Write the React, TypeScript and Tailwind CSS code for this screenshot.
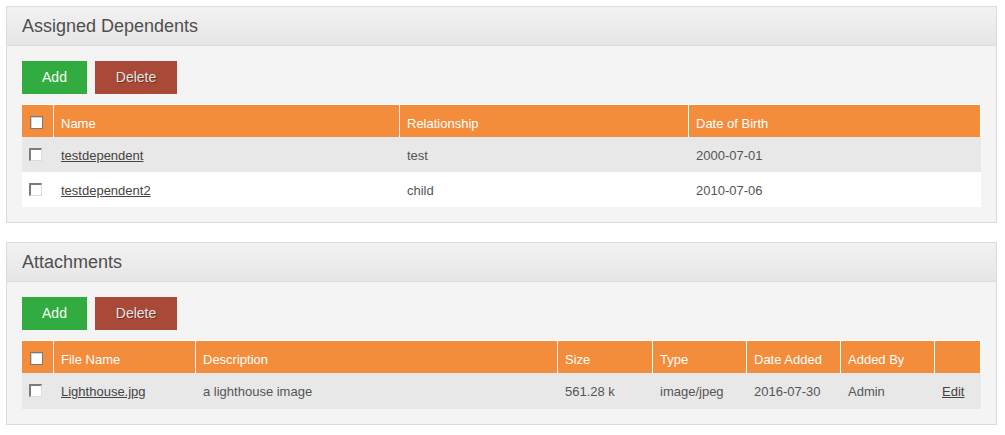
const dependents = [
  { name: 'testdependent', relationship: 'test', dob: '2000-07-01' },
  { name: 'testdependent2', relationship: 'child', dob: '2010-07-06' },
];

const attachments = [
  {
    file: 'Lighthouse.jpg',
    description: 'a lighthouse image',
    size: '561.28 k',
    type: 'image/jpeg',
    added: '2016-07-30',
    by: 'Admin',
  },
];

const HeadCheck = () => (
  <span className="block w-[13px] h-[13px] border border-[#7a7a7a] bg-white shadow-[inset_1px_1px_0_#d4d4d4]" />
);

const RowCheck = () => (
  <span className="block w-[13px] h-[13px] border-t-2 border-l-2 border-r border-b border-t-[#7c7c7c] border-l-[#7c7c7c] border-r-[#dcdcdc] border-b-[#dcdcdc] bg-white" />
);

const Panel = ({ title, children }: { title: string; children: React.ReactNode }) => (
  <section className="mx-[6px] w-[991px] border border-[#dcdcdc] bg-[#f4f4f4]">
    <div className="h-[39px] flex items-center px-[15px] border-b border-[#dcdcdc] bg-gradient-to-b from-[#f2f2f2] to-[#e6e6e6]">
      <h2 className="text-[18px] leading-[20px] text-[#4f4f4f]">{title}</h2>
    </div>
    <div className="px-[15px] pt-[15px] pb-[15px]">
      <div className="flex gap-[8px]">
        <button className="w-[65px] h-[33px] flex items-center justify-center bg-[#32ab41] text-[#f6fff6] text-[14px]">
          Add
        </button>
        <button className="w-[82px] h-[33px] flex items-center justify-center bg-[#a84a37] text-[#e2e2e2] text-[14px] [text-shadow:1px_1px_0_rgba(60,20,10,0.45)]">
          Delete
        </button>
      </div>
      <div className="mt-[10px]">{children}</div>
    </div>
  </section>
);

const th = 'border-t border-r border-white bg-[#f38c3b] text-white font-normal text-left px-[7px] pt-[11px] pb-[6px] leading-[15px] align-top';
const td = 'px-[7px] pt-[11px] leading-[15px] text-[#555] align-top';

export default function App() {
  return (
    <div className="bg-white w-[1005px] h-[435px] pt-[6px] font-['Liberation_Sans',Arial,sans-serif] text-[13px]">
      <Panel title="Assigned Dependents">
        <table className="w-[959px] table-fixed border-separate border-spacing-0">
          <colgroup>
            <col className="w-[32px]" />
            <col className="w-[346px]" />
            <col className="w-[289px]" />
            <col className="w-[292px]" />
          </colgroup>
          <thead>
            <tr>
              <th className={th + ' pl-[8px] pt-[10px]'}>
                <HeadCheck />
              </th>
              <th className={th}>Name</th>
              <th className={th}>Relationship</th>
              <th className={th}>Date of Birth</th>
            </tr>
          </thead>
          <tbody>
            {dependents.map((d, i) => (
              <tr key={d.name} className={i % 2 === 0 ? 'bg-[#e8e8e8]' : 'bg-white'}>
                <td className={td + ' pb-[9px] pt-[10px]'}>
                  <RowCheck />
                </td>
                <td className={td + ' pb-[9px]'}>
                  <a href="#" className="text-[#444] underline">{d.name}</a>
                </td>
                <td className={td + ' pb-[9px]'}>{d.relationship}</td>
                <td className={td + ' pb-[9px]'}>{d.dob}</td>
              </tr>
            ))}
          </tbody>
        </table>
      </Panel>

      <div className="h-[19px]" />

      <Panel title="Attachments">
        <table className="w-[959px] table-fixed border-separate border-spacing-0">
          <colgroup>
            <col className="w-[32px]" />
            <col className="w-[142px]" />
            <col className="w-[362px]" />
            <col className="w-[95px]" />
            <col className="w-[94px]" />
            <col className="w-[94px]" />
            <col className="w-[94px]" />
            <col className="w-[46px]" />
          </colgroup>
          <thead>
            <tr>
              <th className={th + ' pl-[8px] pt-[10px]'}>
                <HeadCheck />
              </th>
              <th className={th}>File Name</th>
              <th className={th}>Description</th>
              <th className={th}>Size</th>
              <th className={th}>Type</th>
              <th className={th}>Date Added</th>
              <th className={th}>Added By</th>
              <th className={th}></th>
            </tr>
          </thead>
          <tbody>
            {attachments.map((a) => (
              <tr key={a.file} className="bg-[#e8e8e8]">
                <td className={td + ' pb-[10px] pt-[10px]'}>
                  <RowCheck />
                </td>
                <td className={td + ' pb-[10px]'}>
                  <a href="#" className="text-[#444] underline">{a.file}</a>
                </td>
                <td className={td + ' pb-[10px]'}>{a.description}</td>
                <td className={td + ' pb-[10px]'}>{a.size}</td>
                <td className={td + ' pb-[10px]'}>{a.type}</td>
                <td className={td + ' pb-[10px]'}>{a.added}</td>
                <td className={td + ' pb-[10px]'}>{a.by}</td>
                <td className={td + ' pb-[10px]'}>
                  <a href="#" className="text-[#444] underline">Edit</a>
                </td>
              </tr>
            ))}
          </tbody>
        </table>
      </Panel>
    </div>
  );
}
